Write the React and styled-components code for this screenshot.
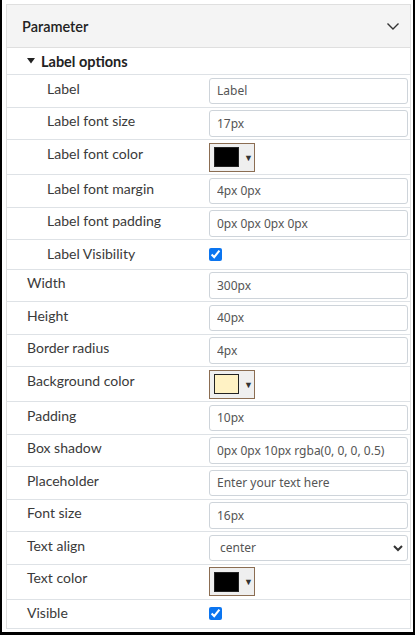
import styled, { createGlobalStyle } from "styled-components";

const GlobalStyle = createGlobalStyle`
  html, body {
    margin: 0;
    padding: 0;
    background: #fff;
  }
  body {
    font-family: Lato, "Noto Sans", sans-serif;
  }
`;

const labelRows = [
  { label: "Label", type: "text", value: "Label" },
  { label: "Label font size", type: "text", value: "17px" },
  { label: "Label font color", type: "color", value: "#000000" },
  { label: "Label font margin", type: "text", value: "4px 0px" },
  { label: "Label font padding", type: "text", value: "0px 0px 0px 0px" },
  { label: "Label Visibility", type: "check" },
];

const mainRows = [
  { label: "Width", type: "text", value: "300px" },
  { label: "Height", type: "text", value: "40px" },
  { label: "Border radius", type: "text", value: "4px" },
  { label: "Background color", type: "color", value: "#fff2c4" },
  { label: "Padding", type: "text", value: "10px" },
  { label: "Box shadow", type: "text", value: "0px 0px 10px rgba(0, 0, 0, 0.5)" },
  { label: "Placeholder", type: "text", value: "Enter your text here" },
  { label: "Font size", type: "text", value: "16px" },
  { label: "Text align", type: "select", value: "center" },
  { label: "Text color", type: "color", value: "#000000" },
  { label: "Visible", type: "check" },
];

function Value({ row }) {
  if (row.type === "color") {
    return (
      <ColorBox>
        <Swatch $color={row.value} />
        <Arrow>▼</Arrow>
      </ColorBox>
    );
  }
  if (row.type === "check") {
    return <Check type="checkbox" checked readOnly />;
  }
  if (row.type === "select") {
    return (
      <SelectWrap>
        <Select value={row.value} onChange={() => {}}>
          <option value="left">left</option>
          <option value="center">center</option>
          <option value="right">right</option>
        </Select>
        <SelectChevron viewBox="0 0 12 12">
          <path d="M2 4 L6 8 L10 4" />
        </SelectChevron>
      </SelectWrap>
    );
  }
  return <TextInput type="text" value={row.value} readOnly />;
}

function PropRow({ row, indent }) {
  return (
    <Row $type={row.type}>
      <LabelCell $indent={indent}>{row.label}</LabelCell>
      <ValueCell>
        <Value row={row} />
      </ValueCell>
    </Row>
  );
}

export default function App() {
  return (
    <Frame>
      <GlobalStyle />
      <Card>
        <Header>
          <Title>Parameter</Title>
          <Chevron viewBox="0 0 14 14">
            <path d="M1.5 4.5 L7 10 L12.5 4.5" />
          </Chevron>
        </Header>
        <GroupRow>
          <Caret viewBox="0 0 8 6">
            <path d="M0 0 L8 0 L4 5.5 Z" />
          </Caret>
          Label options
        </GroupRow>
        {labelRows.map((r) => (
          <PropRow key={r.label} row={r} indent={40} />
        ))}
        {mainRows.map((r) => (
          <PropRow key={r.label} row={r} indent={20} />
        ))}
      </Card>
    </Frame>
  );
}

const Frame = styled.div`
  width: 415px;
  height: 635px;
  box-sizing: border-box;
  border-left: 2px solid #000;
  border-right: 2px solid #000;
  border-bottom: 3px solid #000;
  padding: 4px 2px 0 4px;
  overflow: hidden;
`;

const Card = styled.div`
  border: 1px solid #dfdfdf;
  border-bottom: none;
  background: #fff;
`;

const Header = styled.div`
  height: 42px;
  display: flex;
  align-items: center;
  justify-content: space-between;
  padding: 0 10px 0 15px;
  background: #f4f4f4;
  border-bottom: 1px solid #dfdfdf;
`;

const Title = styled.div`
  font-size: 14.5px;
  font-weight: 600;
  color: #222;
`;

const Chevron = styled.svg`
  width: 14px;
  height: 14px;
  fill: none;
  stroke: #333;
  stroke-width: 1.4;
`;

const GroupRow = styled.div`
  height: 26px;
  display: flex;
  align-items: center;
  padding-left: 20px;
  font-size: 14.5px;
  font-weight: 700;
  color: #222;
  border-bottom: 1px solid #dee2e6;
`;

const Caret = styled.svg`
  width: 8px;
  height: 6px;
  margin-right: 6px;
  fill: #222;
`;

const Row = styled.div`
  display: grid;
  grid-template-columns: 1fr 199px;
  padding: 2.5px 2px 2.5px 0;
  border-bottom: 1px solid #dee2e6;
  min-height: ${({ $type }) => ($type === "check" ? "23.5px" : "auto")};
`;

const LabelCell = styled.div`
  padding-left: ${({ $indent }) => $indent}px;
  font-size: 14px;
  line-height: 21px;
  color: #3a3a3a;
`;

const ValueCell = styled.div`
  display: flex;
  align-items: center;
  min-width: 0;
`;

const TextInput = styled.input`
  width: 100%;
  height: 26.5px;
  box-sizing: border-box;
  border: 1px solid #ced4da;
  border-radius: 3px;
  padding: 0 7px;
  font-family: "Noto Sans", sans-serif;
  font-size: 12px;
  color: #555;
  background: #fff;
  outline: none;
`;

const ColorBox = styled.div`
  width: 46px;
  height: 29px;
  box-sizing: border-box;
  border: 1px solid #8b6d52;
  background: #efefef;
  display: flex;
  align-items: center;
  padding-left: 4px;
  gap: 5px;
`;

const Swatch = styled.div`
  width: 25px;
  height: 20px;
  box-sizing: border-box;
  border: 1px solid #222;
  background: ${({ $color }) => $color};
`;

const Arrow = styled.span`
  font-size: 9px;
  color: #333;
`;

const Check = styled.input`
  width: 13px;
  height: 13px;
  margin: 0;
  accent-color: #0b75f0;
`;

const SelectWrap = styled.div`
  position: relative;
  width: 100%;
`;

const Select = styled.select`
  appearance: none;
  width: 100%;
  height: 26.5px;
  box-sizing: border-box;
  border: 1px solid #ced4da;
  border-radius: 3px;
  padding: 0 10px;
  font-family: "Noto Sans", sans-serif;
  font-size: 12px;
  color: #555;
  background: #fff;
  outline: none;
`;

const SelectChevron = styled.svg`
  position: absolute;
  right: 4px;
  top: 7px;
  width: 12px;
  height: 12px;
  fill: none;
  stroke: #333;
  stroke-width: 2;
  pointer-events: none;
`;
